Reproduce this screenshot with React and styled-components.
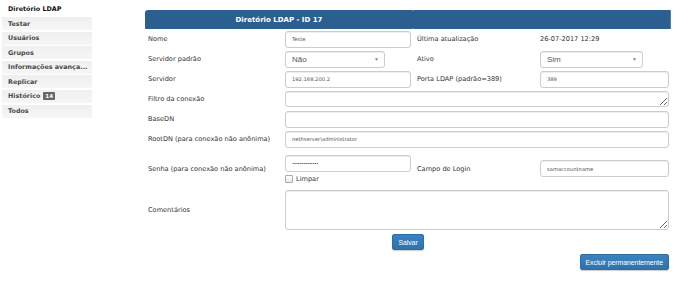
import React from "react";
import styled, { createGlobalStyle } from "styled-components";

const Global = createGlobalStyle`
  html, body { margin: 0; padding: 0; background: #fff; }
  body { font-family: "DejaVu Sans", Verdana, sans-serif; color: #333; }
  * { box-sizing: border-box; }
`;

const Page = styled.div`
  display: flex;
  align-items: flex-start;
  width: 690px;
  height: 283px;
  overflow: hidden;
`;

const Sidebar = styled.nav`
  width: 145px;
  padding: 5px 0 0 2px;
  display: flex;
  flex-direction: column;
`;

const SideTitle = styled.div`
  font-size: 6.4px;
  font-weight: bold;
  color: #111;
  padding-left: 6px;
  height: 12px;
  line-height: 9px;
`;

const SideItem = styled.div`
  width: 90px;
  height: 13px;
  margin-bottom: 1.6px;
  padding-left: 6px;
  display: flex;
  align-items: center;
  gap: 3px;
  font-size: 6.4px;
  font-weight: bold;
  color: #4a4a4a;
  background: linear-gradient(#efefef, #f6f6f6);
  white-space: nowrap;
`;

const Badge = styled.span`
  background: #666;
  color: #fff;
  font-size: 5.5px;
  padding: 1px 2px;
  border-radius: 1px;
  line-height: 6px;
`;

const Main = styled.main`
  width: 526px;
  padding-top: 10px;
  display: flex;
  flex-direction: column;
`;

const Header = styled.div`
  display: grid;
  grid-template-columns: 268px 258px;
  height: 19px;
`;

const HeadCell = styled.div`
  background: #2a5f8f;
  border-radius: ${(p) => (p.$first ? "3px 1px 1px 1px" : "1px 1px 1px 1px")};
  border-right: ${(p) => (p.$first ? "none" : "1px solid #4f7fab")};
  color: #fff;
  font-size: 7px;
  font-weight: bold;
  display: flex;
  align-items: center;
  justify-content: center;
`;

const Row = styled.div`
  display: grid;
  grid-template-columns: 138px 130px 125px 133px;
  height: ${(p) => p.$h || 20}px;
  align-items: center;
`;

const Label = styled.div`
  font-size: 6.6px;
  color: #333;
  padding-left: ${(p) => (p.$right ? "4px" : "3px")};
  white-space: nowrap;
`;

const Value = styled.div`
  font-size: 6.6px;
  color: #333;
  padding-left: 2px;
`;

const Cell = styled.div`
  grid-column: ${(p) => p.$span || "auto"};
  padding: 0 2px;
  display: flex;
  flex-direction: column;
  align-items: stretch;
`;

const Input = styled.input`
  height: 17px;
  width: 100%;
  border: 1px solid #ccc;
  border-radius: 3px;
  box-shadow: inset 0 1px 1px rgba(0, 0, 0, 0.075);
  font-family: "DejaVu Sans", Verdana, sans-serif;
  font-size: 5.2px;
  color: #555;
  padding: 0 6px;
  background: #fff;
  outline: none;
  &[type="password"] { font-size: 4px; letter-spacing: -0.5px; color: #2a4a80; }
`;

const TextArea = styled.textarea`
  height: ${(p) => p.$h}px;
  width: 100%;
  border: 1px solid #ccc;
  border-radius: 3px;
  box-shadow: inset 0 1px 1px rgba(0, 0, 0, 0.075);
  background: #fff;
  resize: vertical;
  display: block;
  outline: none;
`;

const Select = styled.div`
  width: ${(p) => p.$w}px;
  height: 17px;
  border: 1px solid #ccc;
  border-radius: 3px;
  box-shadow: inset 0 1px 1px rgba(0, 0, 0, 0.075);
  display: flex;
  align-items: center;
  justify-content: space-between;
  padding: 0 5px 0 6px;
  font-family: "Liberation Sans", Arial, sans-serif;
  font-size: 8px;
  color: #555;
  background: #fff;
`;

const Caret = styled.span`
  font-size: 5px;
  color: #888;
`;

const CheckRow = styled.label`
  display: flex;
  align-items: center;
  gap: 3px;
  margin-top: 3px;
  font-size: 6.6px;
  color: #333;
`;

const Box = styled.span`
  width: 8px;
  height: 8px;
  border: 1px solid #aaa;
  border-radius: 1px;
  background: linear-gradient(#fff, #e8e8e8);
`;

const ButtonRow = styled.div`
  display: flex;
  justify-content: ${(p) => p.$justify};
  height: 20px;
  align-items: center;
  padding-right: ${(p) => (p.$justify === "flex-end" ? "2px" : "0")};
`;

const Button = styled.button`
  height: 16px;
  padding: 0 5px;
  border: 1px solid #2e6da4;
  border-radius: 2px;
  background: linear-gradient(#3a82c0, #2f73ad);
  color: #fff;
  font-family: "Liberation Sans", Arial, sans-serif;
  font-size: 7px;
  box-shadow: 0 1px 1px rgba(0, 0, 0, 0.2);
  letter-spacing: -0.1px;
`;

export default function App() {
  const side = ["Testar", "Usuários", "Grupos", "Informações avança...", "Replicar"];
  return (
    <Page>
      <Global />
      <Sidebar>
        <SideTitle>Diretório LDAP</SideTitle>
        {side.map((s) => (
          <SideItem key={s}>{s}</SideItem>
        ))}
        <SideItem>
          Histórico <Badge>14</Badge>
        </SideItem>
        <SideItem>Todos</SideItem>
      </Sidebar>
      <Main>
        <Header>
          <HeadCell $first>Diretório LDAP - ID 17</HeadCell>
          <HeadCell />
        </Header>
        <Row>
          <Label>Nome</Label>
          <Cell><Input readOnly defaultValue="Teste" /></Cell>
          <Label $right>Última atualização</Label>
          <Value>26-07-2017 12:29</Value>
        </Row>
        <Row>
          <Label>Servidor padrão</Label>
          <Cell><Select $w={100}>Não<Caret>▼</Caret></Select></Cell>
          <Label $right>Ativo</Label>
          <Cell><Select $w={103}>Sim<Caret>▼</Caret></Select></Cell>
        </Row>
        <Row>
          <Label>Servidor</Label>
          <Cell><Input readOnly defaultValue="192.168.200.2" /></Cell>
          <Label $right>Porta LDAP (padrão=389)</Label>
          <Cell><Input readOnly defaultValue="389" /></Cell>
        </Row>
        <Row>
          <Label>Filtro da conexão</Label>
          <Cell $span="2 / 5"><TextArea readOnly $h={16} /></Cell>
        </Row>
        <Row>
          <Label>BaseDN</Label>
          <Cell $span="2 / 5"><Input readOnly defaultValue="" /></Cell>
        </Row>
        <Row>
          <Label>RootDN (para conexão não anônima)</Label>
          <Cell $span="2 / 5"><Input readOnly defaultValue="nethserver\administrator" /></Cell>
        </Row>
        <Row $h={39}>
          <Label>Senha (para conexão não anônima)</Label>
          <Cell>
            <Input readOnly type="password" defaultValue="12345678901234" />
            <CheckRow><Box />Limpar</CheckRow>
          </Cell>
          <Label $right>Campo de Login</Label>
          <Cell><Input readOnly defaultValue="samaccountname" /></Cell>
        </Row>
        <Row $h={44}>
          <Label>Comentários</Label>
          <Cell $span="2 / 5"><TextArea readOnly $h={40} /></Cell>
        </Row>
        <ButtonRow $justify="center">
          <Button>Salvar</Button>
        </ButtonRow>
        <ButtonRow $justify="flex-end">
          <Button>Excluir permanentemente</Button>
        </ButtonRow>
      </Main>
    </Page>
  );
}
